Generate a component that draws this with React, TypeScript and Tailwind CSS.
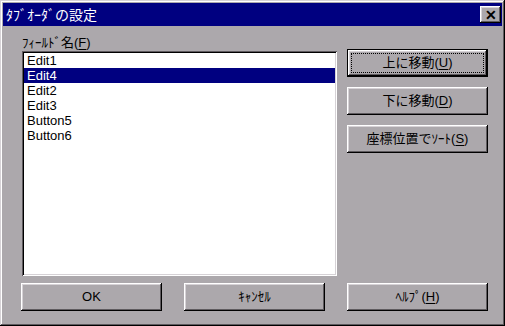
import React from 'react';

const font = { fontFamily: '"Liberation Sans", "Noto Sans CJK JP", sans-serif' };

// raised win95 bevel
const raised =
  'shadow-[inset_-1px_-1px_#000,inset_1px_1px_#fff,inset_-2px_-2px_#5f5b5f,inset_2px_2px_#d6d2d6]';

const Mn = ({ c }: { c: string }) => <span className="underline underline-offset-2">{c}</span>;

const Btn = ({
  children,
  isDefault = false,
  className = '',
}: {
  children: React.ReactNode;
  isDefault?: boolean;
  className?: string;
}) =>
  isDefault ? (
    <div className={`h-[28px] w-[141px] shrink-0 border border-black bg-[#aca8ac] ${className}`}>
      <div className={`h-full w-full p-[3px] ${raised}`}>
        <div className="flex h-full w-full items-center justify-center border border-dotted border-black text-[13px] text-black">
          {children}
        </div>
      </div>
    </div>
  ) : (
    <div
      className={`flex h-[28px] w-[141px] shrink-0 items-center justify-center bg-[#aca8ac] text-[13px] text-black ${raised} ${className}`}
    >
      {children}
    </div>
  );

const items = ['Edit1', 'Edit4', 'Edit2', 'Edit3', 'Button5', 'Button6'];

export default function App() {
  return (
    <div
      style={font}
      className="flex h-[326px] w-[505px] flex-col bg-[#aca8ac] p-[3px] shadow-[inset_-1px_-1px_#000,inset_1px_1px_#d6d2d6,inset_-2px_-2px_#5f5b5f,inset_2px_2px_#fff]"
    >
      {/* title bar */}
      <div className="flex h-[23px] items-center justify-between bg-[#000080] pl-[3px] pr-[1px]">
        <span className="text-[14px] leading-none text-white">ﾀﾌﾞｵｰﾀﾞの設定</span>
        <div
          className={`flex h-[17px] w-[21px] items-center justify-center bg-[#aca8ac] text-[14px] font-bold leading-none text-black ${raised}`}
        >
          ✕
        </div>
      </div>

      <div className="flex flex-col pl-[18px]">
        <div className="mt-[10px] flex gap-[10px]">
          <div className="ml-px flex w-[315px] shrink-0 flex-col">
            <div className="h-[15px] text-[13px] leading-[14px] text-black">
              ﾌｨｰﾙﾄﾞ名(<Mn c="F" />)
            </div>
            <div className="h-[225px] bg-white p-[2px] shadow-[inset_1px_1px_#5f5b5f,inset_-1px_-1px_#fff,inset_2px_2px_#000,inset_-2px_-2px_#d6d2d6]">
              {items.map((it, i) => (
                <div
                  key={it}
                  className={`h-[15px] pl-[3px] text-[13px] leading-[15px] ${
                    i === 1 ? 'bg-[#000080] text-white' : 'text-black'
                  }`}
                >
                  {it}
                </div>
              ))}
            </div>
          </div>
          <div className="flex flex-col gap-[10px] pt-[13px]">
            <Btn isDefault>
              上に移動(<Mn c="U" />)
            </Btn>
            <Btn>
              下に移動(<Mn c="D" />)
            </Btn>
            <Btn>
              座標位置でｿｰﾄ(<Mn c="S" />)
            </Btn>
          </div>
        </div>

        <div className="mt-[7px] flex gap-[22px]">
          <Btn>OK</Btn>
          <Btn>ｷｬﾝｾﾙ</Btn>
          <Btn>
            ﾍﾙﾌﾟ(<Mn c="H" />)
          </Btn>
        </div>
      </div>
    </div>
  );
}
